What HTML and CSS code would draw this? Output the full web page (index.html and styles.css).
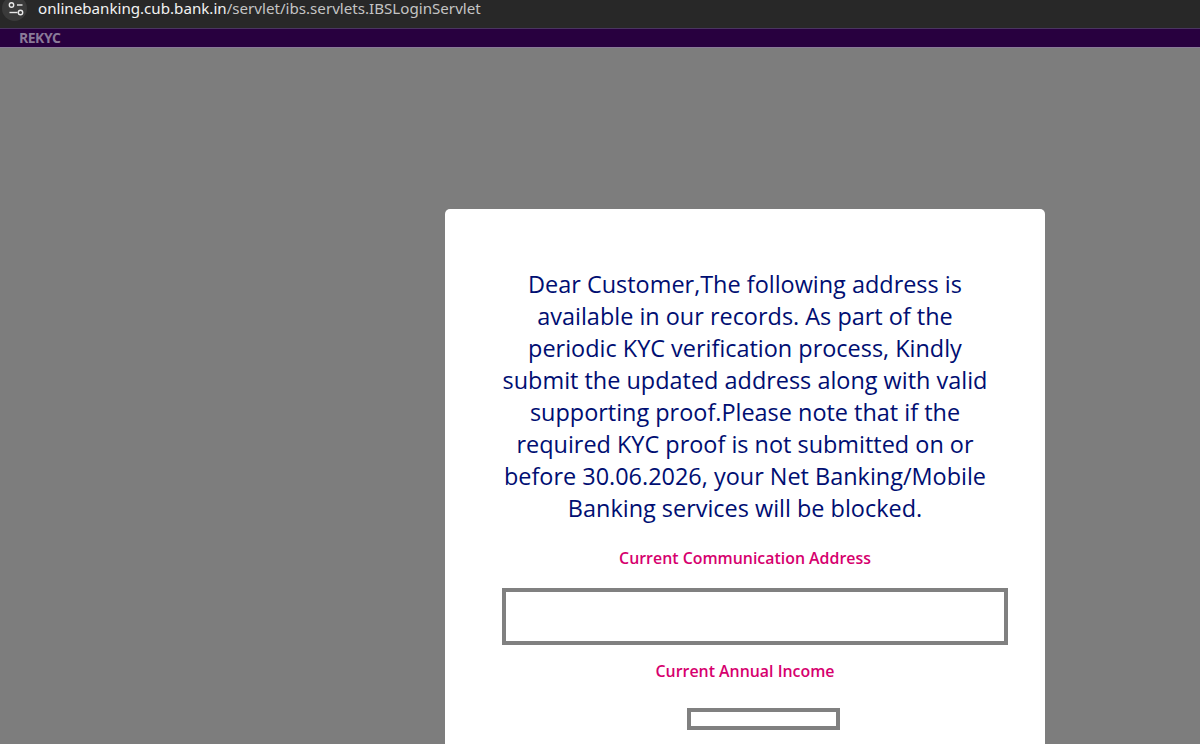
FILE: index.html
```html
<!DOCTYPE html>
<html lang="en">
<head>
    <meta charset="UTF-8">
    <meta name="viewport" content="width=device-width, initial-scale=1.0">
    <title>REKYC</title>
    <link rel="stylesheet" href="styles.css">
</head>
<body>
    <div class="browser-bar">
        <div class="site-icon">
            <svg width="18" height="16" viewBox="0 0 18 16" fill="none" stroke="#e8e8e8" stroke-width="1.4">
                <circle cx="5.5" cy="4" r="2.2"/>
                <path d="M11 4h5.5"/>
                <path d="M3.5 11.5h8"/>
                <circle cx="14.5" cy="11.5" r="2.2"/>
            </svg>
        </div>
        <p class="url">onlinebanking.cub.bank.in<span class="url-path">/servlet/ibs.servlets.IBSLoginServlet</span></p>
    </div>
    <div class="title-bar">REKYC</div>
    <div class="page">
        <div class="modal">
            <p class="message">Dear Customer,The following address is available in our records. As part of the periodic KYC verification process, Kindly submit the updated address along with valid supporting proof.Please note that if the required KYC proof is not submitted on or before 30.06.2026, your Net Banking/Mobile Banking services will be blocked.</p>
            <p class="field-label">Current Communication Address</p>
            <div class="field-box address-box"></div>
            <p class="field-label">Current Annual Income</p>
            <div class="field-box income-box"></div>
        </div>
    </div>
</body>
</html>
```

FILE: styles.css
```css
body {
    margin: 0;
    height: 744px;
    overflow: hidden;
    background-color: #7d7d7d;
    font-family: "Open Sans", sans-serif;
    display: flex;
    flex-direction: column;
}
.browser-bar {
    height: 28px;
    flex-shrink: 0;
    background-color: #282828;
    display: flex;
    align-items: flex-start;
    overflow: hidden;
}
.site-icon {
    width: 25px;
    height: 25px;
    margin: -4px 11px 0 2px;
    border-radius: 50%;
    background-color: #3a3a3a;
    display: flex;
    align-items: center;
    justify-content: center;
    flex-shrink: 0;
}
.url {
    margin: 0;
    font-family: "Noto Sans", sans-serif;
    font-size: 15.15px;
    line-height: 16px;
    color: #f2f2f2;
    white-space: nowrap;
}
.url-path {
    color: #c4c4c4;
}
.title-bar {
    height: 20px;
    flex-shrink: 0;
    box-sizing: border-box;
    padding-left: 19px;
    background-color: #28003f;
    border-top: 1px solid #4a3560;
    border-bottom: 1px solid #8a7a98;
    color: #8a7a98;
    font-size: 14px;
    font-weight: 700;
    line-height: 18px;
    letter-spacing: -0.5px;
}
.page {
    flex: 1;
    min-height: 0;
    padding: 161px 155px 0 445px;
}
.modal {
    width: 600px;
    height: 100%;
    box-sizing: border-box;
    padding: 59px 40px 0;
    background-color: white;
    border-radius: 5px 5px 0 0;
    display: flex;
    flex-direction: column;
    align-items: center;
}
.message {
    margin: 0 0 23px;
    width: 500px;
    color: #000e72;
    font-size: 23.45px;
    line-height: 32px;
    text-align: center;
}
.field-label {
    margin: 0;
    color: #d6006e;
    font-size: 15.9px;
    font-weight: 600;
    line-height: 22px;
    text-align: center;
}
.field-box {
    box-sizing: border-box;
    border: 4px solid #808080;
    background-color: white;
    flex-shrink: 0;
}
.address-box {
    width: 506px;
    height: 57px;
    margin: 19px 0 15px 19px;
}
.income-box {
    width: 153px;
    height: 22px;
    margin: 26px 0 0 36px;
}
```
